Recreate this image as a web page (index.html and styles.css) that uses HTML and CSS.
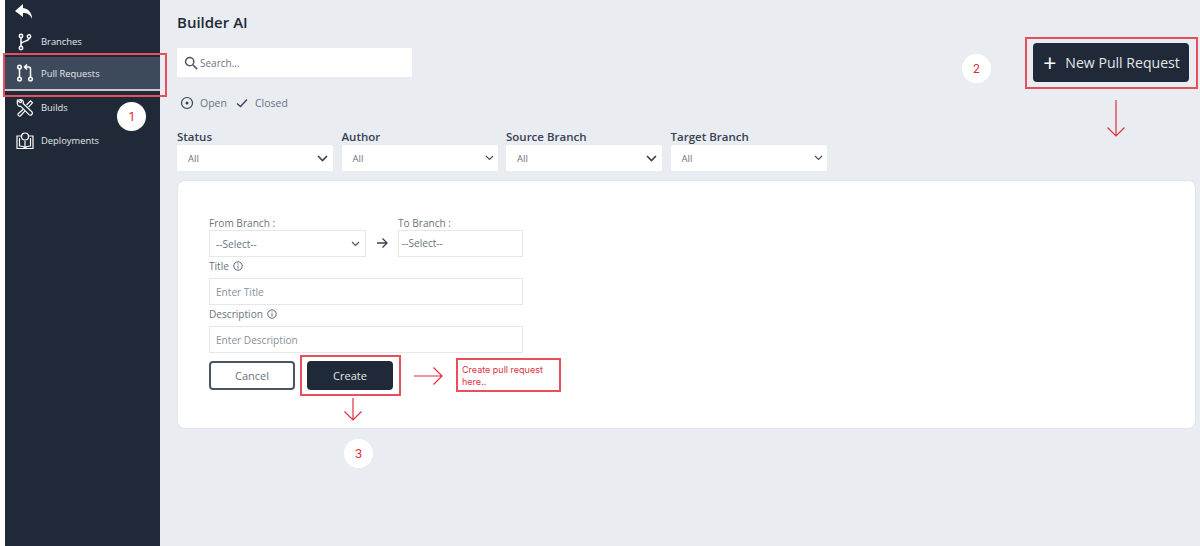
FILE: index.html
```html
<!DOCTYPE html>
<html>
<head>
    <meta charset="UTF-8">
    <title>Builder AI</title>
    <link rel="stylesheet" href="styles.css">
</head>
<body>
    <aside class="sidebar">
        <svg class="back_icon" viewBox="0 0 20 18" width="20" height="18"><path d="M9 1 1 8l8 6v-4c4 0 7 1 9 6 0-6-3-10-9-11z" fill="#fff"/></svg>
        <nav class="side_nav">
            <a class="side_item">
                <svg class="side_icon" viewBox="0 0 18 18" width="18" height="18" fill="none" stroke="#fff" stroke-width="1.5"><circle cx="5" cy="3" r="1.7"/><circle cx="5" cy="15" r="1.7"/><circle cx="13" cy="3.500" r="1.700"/><path d="M5 4.700v8.600M13 5.200c0 3.800-8 2.500-8 6"/></svg>
                Branches
            </a>
            <a class="side_item active">
                <svg class="side_icon" viewBox="0 0 18 18" width="18" height="18" fill="none" stroke="#fff" stroke-width="1.5"><circle cx="3.500" cy="3" r="1.800"/><circle cx="3.500" cy="15" r="1.800"/><circle cx="14.500" cy="15" r="1.800"/><path d="M3.500 5v8M14.500 13V5c0-1.500-1-2-2-2H9M11 .5 8.500 3 11 5.500"/></svg>
                Pull Requests
            </a>
            <a class="side_item">
                <svg class="side_icon" viewBox="0 0 18 18" width="18" height="18" fill="none" stroke="#fff" stroke-width="1.200"><path d="M1.500 1.200 4 3.500l1.300-.2.200-1.400L3.500.8C6 .2 8 2 7.200 4.500l8.600 8.300c1.800 1.800-1 4.400-2.800 2.800L4.600 7.200C2.500 8 .6 6 1.500 1.200z"/><path d="m10.500 6 4-4.200 2 2-4 4.300M7 10.500l-4.800 4.200c-1 1.500 1 3 2.300 2l4.300-4.500"/></svg>
                Builds
            </a>
            <a class="side_item">
                <svg class="side_icon" viewBox="0 0 18 18" width="18" height="18" fill="none" stroke="#fff" stroke-width="1.200"><path d="M5 4H1v12.500h16V4h-4"/><path d="M3.500 6v8c2.500 0 4.500.5 5.500 2 1-1.500 3-2 5.500-2V6M9 16V9"/><circle cx="9" cy="4.500" r="3.500"/></svg>
                Deployments
            </a>
        </nav>
    </aside>

    <main class="content">
        <div class="top_row">
            <div>
                <h1 class="page_title">Builder AI</h1>
                <div class="search_box">
                    <svg viewBox="0 0 16 16" width="14" height="14" fill="none" stroke="#4b5563" stroke-width="1.700"><circle cx="6.500" cy="6.500" r="4.700"/><path d="m10 10 5 5"/></svg>
                    <span>Search...</span>
                </div>
            </div>
            <button class="new_pr_btn"><span class="plus">+</span>New Pull Request</button>
        </div>

        <div class="state_row">
            <svg viewBox="0 0 14 14" width="14" height="14" fill="none" stroke="#374151" stroke-width="1.200"><circle cx="7" cy="7" r="5.500"/><circle cx="7" cy="7" r="1.500" fill="#374151" stroke="none"/></svg>
            <span class="state_open">Open</span>
            <svg viewBox="0 0 14 14" width="14" height="14" fill="none" stroke="#374151" stroke-width="1.300"><path d="m2 7.500 3.500 3L12 3.500"/></svg>
            <span>Closed</span>
        </div>

        <div class="filters">
            <div class="filter">
                <label>Status</label>
                <div class="filter_select">All<svg class="chev_big" viewBox="0 0 11 7" width="11" height="7"><path d="m1 1 4.500 4.500L10 1" fill="none" stroke="#374151" stroke-width="1.600"/></svg></div>
            </div>
            <div class="filter">
                <label>Author</label>
                <div class="filter_select">All<svg class="chev_small" viewBox="0 0 9 6" width="9" height="6"><path d="m1 1 3.500 3.500L8 1" fill="none" stroke="#4b5563" stroke-width="1.200"/></svg></div>
            </div>
            <div class="filter">
                <label>Source Branch</label>
                <div class="filter_select">All<svg class="chev_big" viewBox="0 0 11 7" width="11" height="7"><path d="m1 1 4.500 4.500L10 1" fill="none" stroke="#374151" stroke-width="1.600"/></svg></div>
            </div>
            <div class="filter">
                <label>Target Branch</label>
                <div class="filter_select">All<svg class="chev_small" viewBox="0 0 9 6" width="9" height="6"><path d="m1 1 3.500 3.500L8 1" fill="none" stroke="#4b5563" stroke-width="1.200"/></svg></div>
            </div>
        </div>

        <section class="pr_card">
            <div class="branch_row">
                <div class="from_col">
                    <label>From Branch :</label>
                    <div class="field field_select">--Select--<svg viewBox="0 0 9 6" width="9" height="6"><path d="m1 1 3.500 3.500L8 1" fill="none" stroke="#4b5563" stroke-width="1.200"/></svg></div>
                </div>
                <svg class="branch_arrow" viewBox="0 0 12 12" width="12" height="12" fill="none" stroke="#374151" stroke-width="1.300"><path d="M1 6h10M6.500 1.500 11 6l-4.500 4.500"/></svg>
                <div class="to_col">
                    <label>To Branch :</label>
                    <div class="field field_to">--Select--</div>
                </div>
            </div>
            <label class="field_label">Title <svg viewBox="0 0 10 10" width="10" height="10" fill="none" stroke="#4b5563" stroke-width=".9"><circle cx="5" cy="5" r="4.200"/><path d="M5 4.500v2.800M5 2.500v1"/></svg></label>
            <div class="field field_text">Enter Title</div>
            <label class="field_label">Description <svg viewBox="0 0 10 10" width="10" height="10" fill="none" stroke="#4b5563" stroke-width=".9"><circle cx="5" cy="5" r="4.200"/><path d="M5 4.500v2.800M5 2.500v1"/></svg></label>
            <div class="field field_text">Enter Description</div>
            <div class="form_btns">
                <button class="btn_cancel">Cancel</button>
                <button class="btn_create">Create</button>
            </div>
        </section>
    </main>

    <!-- red notes drawn over the page -->
    <div class="note_box note_pr_nav"></div>
    <div class="note_box note_new_pr"></div>
    <div class="note_box note_create"></div>
    <div class="note_box note_text">Create pull request here..</div>
    <div class="note_num num_1">1</div>
    <div class="note_num num_2">2</div>
    <div class="note_num num_3">3</div>
    <svg class="note_arrow arrow_new_pr" viewBox="0 0 20 38" width="20" height="38"><path d="M10 0v36M1.500 27.500 10 36l8.500-8.500"/></svg>
    <svg class="note_arrow arrow_create_down" viewBox="0 0 20 24" width="20" height="24"><path d="M10 0v22M1.500 13.500 10 22l8.500-8.500"/></svg>
    <svg class="note_arrow arrow_create_right" viewBox="0 0 30 20" width="30" height="20"><path d="M0 10h28M19.500 1.500 28 10l-8.500 8.500"/></svg>
</body>
</html>
```

FILE: styles.css
```css
* {
    box-sizing: border-box;
}

body {
    margin: 0;
    height: 546px;
    overflow: hidden;
    display: flex;
    background-color: #fff;
    font-family: 'Open Sans', sans-serif;
    color: #1f2937;
}

button {
    font-family: inherit;
    border: none;
}

/* sidebar */
.sidebar {
    width: 155px;
    margin-left: 5px;
    flex-shrink: 0;
    background-color: #1f2937;
    color: #fff;
}

.back_icon {
    display: block;
    margin: 3px 0 0 9px;
}

.side_nav {
    margin-top: 4px;
}

.side_item {
    display: flex;
    align-items: center;
    gap: 7px;
    height: 33px;
    padding-left: 11px;
    font-size: 9.400px;
    font-weight: 500;
    color: #e5e7eb;
}

.side_item.active {
    height: 34px;
    margin-top: -1px;
    background-color: #3d4a5c;
    border-bottom: 2px solid #c5cad2;
}

.side_icon {
    flex-shrink: 0;
}

/* main area */
.content {
    flex: 1;
    background-color: #e9ecf1;
    padding: 0 4px 0 17px;
}

.top_row {
    display: flex;
    justify-content: space-between;
    padding-right: 7px;
}

.page_title {
    margin: 12px 0 16px;
    font-size: 15px;
    line-height: 20px;
    font-weight: 600;
    color: #1f2937;
}

.search_box {
    width: 235px;
    height: 29px;
    display: flex;
    align-items: center;
    gap: 2px;
    padding-left: 7px;
    background-color: #fff;
    font-size: 10px;
    color: #6b7280;
}

.new_pr_btn {
    width: 156px;
    height: 39px;
    margin-top: 43px;
    display: flex;
    align-items: center;
    justify-content: center;
    gap: 9px;
    padding-left: 7px;
    border-radius: 4px;
    background-color: #1f2937;
    color: #e5e7eb;
    font-size: 14.100px;
    font-weight: 500;
}

.plus {
    font-size: 23px;
    font-weight: 400;
    line-height: 20px;
    color: #fff;
}

.state_row {
    display: flex;
    align-items: center;
    height: 16px;
    margin: 13px 0 0 3px;
    gap: 6px;
    font-size: 10.500px;
    color: #6b7280;
}

.state_open {
    margin-right: 2px;
}

.filters {
    display: flex;
    gap: 8.500px;
    margin-top: 18px;
}

.filter {
    width: 156px;
}

.filter label {
    display: block;
    font-size: 11.500px;
    line-height: 16px;
    font-weight: 600;
    color: #374151;
}

.filter_select {
    height: 26px;
    display: flex;
    align-items: center;
    justify-content: space-between;
    padding: 0 5px 0 11px;
    background-color: #fff;
    border-radius: 2px;
    font-size: 9.500px;
    color: #6b7280;
}

.chev_small {
    margin-right: -1px;
}

/* pull request form */
.pr_card {
    margin-top: 9px;
    height: 249px;
    padding: 35px 31px 0;
    background-color: #fff;
    border: 1px solid #e2e5ea;
    border-radius: 8px;
}

.pr_card label {
    display: block;
    font-size: 10.100px;
    line-height: 14px;
    color: #6b7280;
}

.branch_row {
    display: flex;
    align-items: flex-end;
}

.from_col {
    width: 157px;
}

.branch_arrow {
    margin: 0 10px 8px 10px;
}

.to_col {
    width: 125px;
}

.field {
    border: 1px solid #e5e7eb;
    background-color: #fff;
    font-size: 10.100px;
    color: #6b7280;
    height: 27px;
    display: flex;
    align-items: center;
    padding: 0 6px;
}

.field_select {
    justify-content: space-between;
}

.field_select svg {
    margin-right: -1px;
}

.field_to {
    align-items: flex-start;
    padding: 5px 3px 0;
}

.pr_card .field_label {
    display: flex;
    align-items: flex-start;
    gap: 4px;
    padding-top: 2px;
    height: 21px;
}

.field_label svg {
    margin-top: 2px;
}

.field_text {
    width: 314px;
    color: #8a919c;
}

.form_btns {
    display: flex;
    gap: 12px;
    margin-top: 8px;
}

.form_btns button {
    width: 86px;
    height: 29px;
    border-radius: 4px;
    font-size: 11px;
    font-weight: 500;
}

.btn_cancel {
    background-color: #fff;
    border: 2px solid #4b5563;
    color: #6b7280;
}

.btn_create {
    background-color: #1f2937;
    color: #e5e7eb;
}

/* annotations */
.note_box {
    position: absolute;
    border: 2px solid #e5505c;
}

.note_pr_nav {
    left: 3px;
    top: 53px;
    width: 164px;
    height: 44px;
}

.note_new_pr {
    left: 1025px;
    top: 37px;
    width: 173px;
    height: 52px;
}

.note_create {
    left: 300px;
    top: 355px;
    width: 101px;
    height: 41px;
}

.note_text {
    left: 456px;
    top: 358px;
    width: 105px;
    height: 34px;
    padding: 4px 4px 0;
    font-family: 'Inter', sans-serif;
    font-size: 9px;
    line-height: 11.500px;
    color: #e0303f;
}

.note_num {
    position: absolute;
    width: 29px;
    height: 29px;
    display: flex;
    align-items: center;
    justify-content: center;
    border-radius: 50%;
    background-color: #fff;
    color: #d92d3a;
    font-family: 'Inter', sans-serif;
    font-size: 12px;
}

.num_1 {
    left: 117px;
    top: 102px;
}

.num_2 {
    left: 962px;
    top: 54px;
}

.num_3 {
    left: 344px;
    top: 439px;
}

.note_arrow {
    position: absolute;
    fill: none;
    stroke: #e0303f;
    stroke-width: 1.200;
}

.arrow_new_pr {
    left: 1106px;
    top: 100px;
}

.arrow_create_down {
    left: 343px;
    top: 398px;
}

.arrow_create_right {
    left: 414px;
    top: 366px;
}
```
